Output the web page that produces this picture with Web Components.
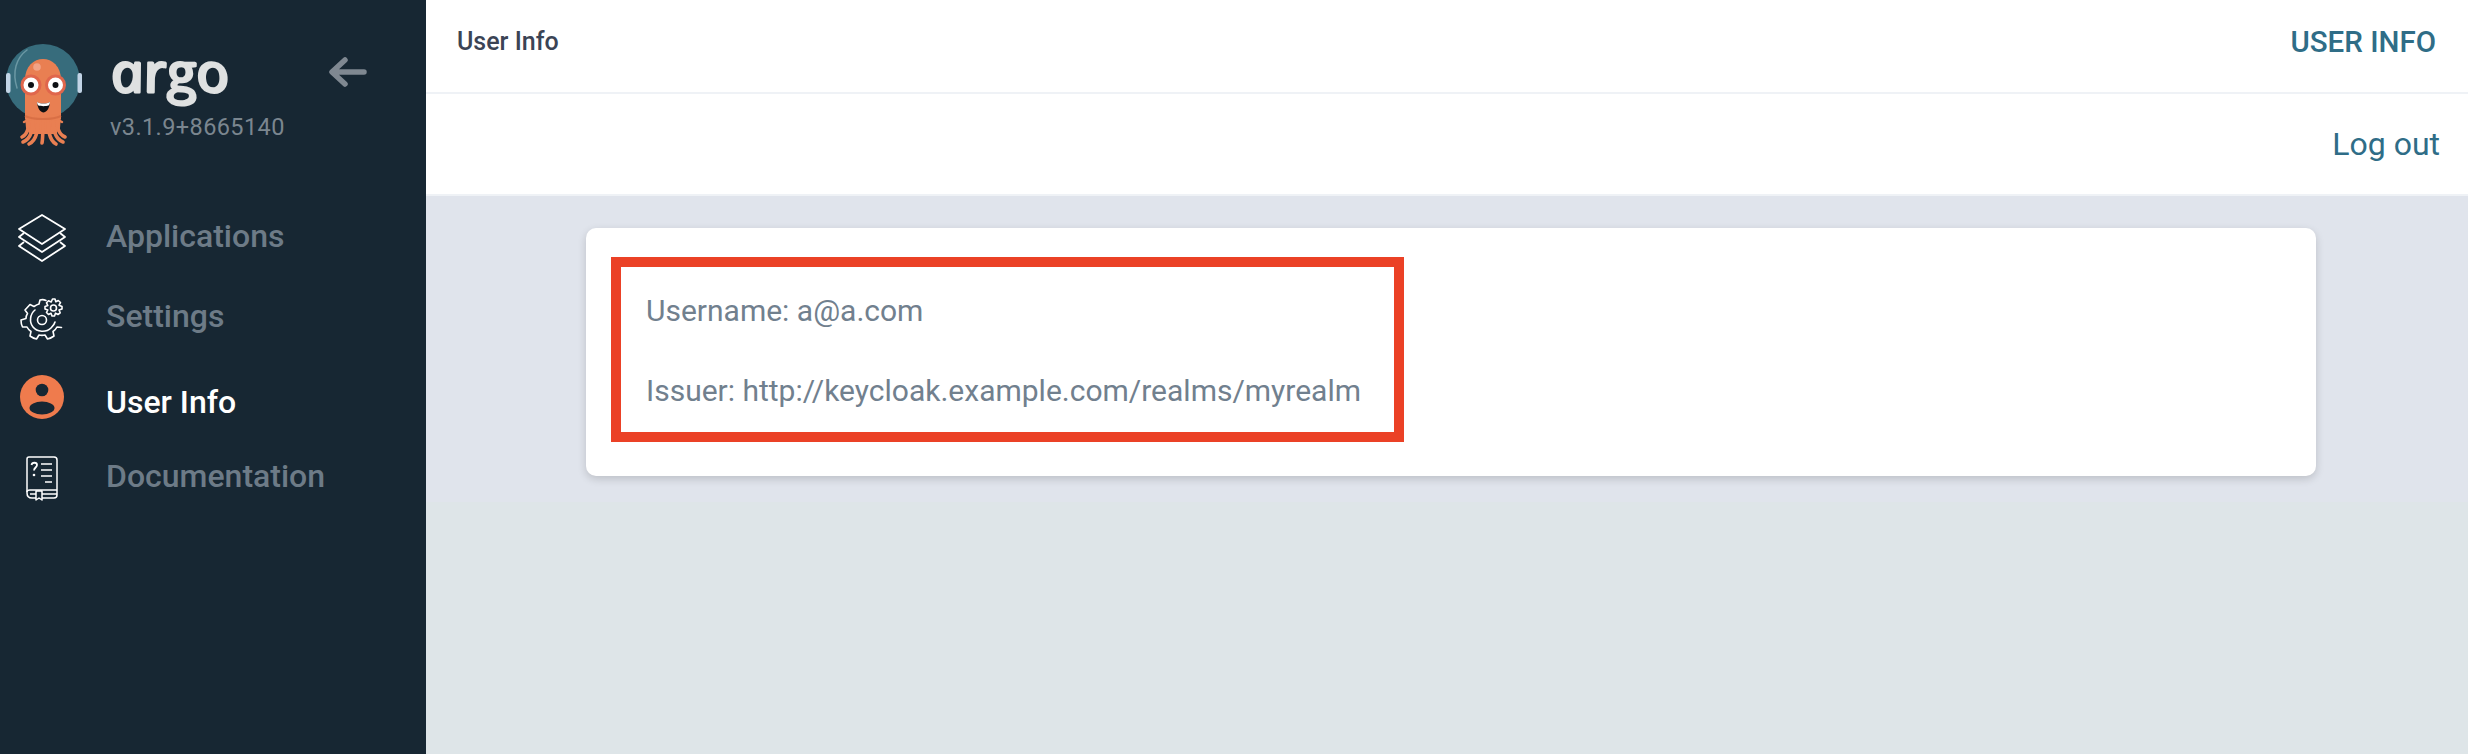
<!DOCTYPE html>
<html>
<head>
<meta charset="utf-8">
<title>User Info</title>
<style>
  html, body { margin: 0; height: 100%; }
  body { font-family: Roboto, "Liberation Sans", sans-serif; background: #dee5e8; overflow: hidden; }
</style>
</head>
<body>
<argo-app>
  <argo-sidebar slot="side"></argo-sidebar>
  <argo-topbar slot="top" title="User Info" tab="USER INFO"></argo-topbar>
  <argo-toolbar slot="top"><a>Log out</a></argo-toolbar>
  <user-card username="a@a.com" issuer="http://keycloak.example.com/realms/myrealm"></user-card>
</argo-app>

<script>
// page shell: dark sidebar on the left, bars and content on the right
class ArgoApp extends HTMLElement {
    constructor() {
        super();
        this.shadow = this.attachShadow({ mode: "open" });
    }
    connectedCallback() {
        this.shadow.innerHTML = /*html*/`
        <style>
            :host { display: flex; width: 100%; height: 754px; }
            .side { flex: 0 0 426px; }
            .main { flex: 1; min-width: 0; display: flex; flex-direction: column; }
            .content { height: 306px; background: #e0e4ec; }
        </style>
        <div class="side"><slot name="side"></slot></div>
        <div class="main">
            <slot name="top"></slot>
            <div class="content"><slot></slot></div>
        </div>`;
    }
}

class ArgoSidebar extends HTMLElement {
    constructor() {
        super();
        this.shadow = this.attachShadow({ mode: "open" });
    }
    connectedCallback() {
        this.shadow.innerHTML = /*html*/`
        <style>
            :host { display: block; height: 754px; background: #172733; color: #fff; }
            .logo-row { display: flex; height: 198px; position: relative; }
            .octo { width: 88px; height: 110px; margin-top: 40px; flex: none; }
            .brand { margin-left: 22px; }
            .word { display: block; width: 140px; height: 60px; margin-top: 46px; overflow: visible; }
            .word text { font-family: "Open Sans", sans-serif; font-style: italic; font-size: 54px; font-weight: 500; fill: #dfe1e1; stroke: #dfe1e1; stroke-width: 3; stroke-linejoin: round; }
            .ver { font-size: 23.5px; color: #7b868f; line-height: 28px; letter-spacing: .4px; margin-top: 7px; }
            .back { position: absolute; left: 328px; top: 57px; width: 40px; height: 34px; }
        </style>
        <div class="logo-row">
            <svg class="octo" viewBox="0 40 88 110">
                <circle cx="43" cy="81" r="37" fill="#376c7c"/>
                <path d="M17 88C12 72 16 58 27 50" fill="none" stroke="#6b98a4" stroke-width="1.5" stroke-linecap="round"/>
                <rect x="6" y="73" width="4.500" height="20" rx="2" fill="#c2d4e6"/>
                <rect x="77.500" y="73" width="4.500" height="20" rx="2" fill="#c2d4e6"/>
                <path d="M25 119V80C25 52 61 52 61 80V119Z" fill="#e97f52"/>
                <circle cx="37" cy="67" r="3.800" fill="#f2a386"/>
                <path d="M25 116H61L60 128L56 134H30L26 128Z" fill="#e97f52"/>
                <g fill="none" stroke="#e97f52" stroke-width="3.600" stroke-linecap="round">
                    <path d="M29 116C29 127 28 134 22 137"/>
                    <path d="M33 116C33 130 31 139 23 142"/>
                    <path d="M38 116C38 130 37 140 29 144"/>
                    <path d="M43 116C43 130 43 138 42 143"/>
                    <path d="M48 116C48 130 49 140 56 144"/>
                    <path d="M53 116C53 130 55 139 63 142"/>
                    <path d="M57 116C57 127 58 134 65 137"/>
                    <path d="M24 122L30 119M62 122L56 119" stroke-width="2.500"/>
                </g>
                <path d="M25 116C33 120 53 120 61 116" fill="none" stroke="#d96f45" stroke-width="2"/>
                <circle cx="31" cy="85" r="9" fill="#fff" stroke="#e0664c" stroke-width="3"/>
                <circle cx="55.500" cy="85" r="9" fill="#fff" stroke="#e0664c" stroke-width="3"/>
                <circle cx="31" cy="85" r="3" fill="#0d1014"/>
                <circle cx="55.500" cy="85" r="3" fill="#0d1014"/>
                <path d="M37 102C41 104 46 104 50 102C49.500 109 46 112.500 43.500 112.500C41 112.500 37.500 109 37 102Z" fill="#0d1014"/>
                <path d="M37 102C41 104 46 104 50 102C49.800 104 49.300 105 48.500 105.600C46 106.400 41 106.400 38.500 105.600C37.700 105 37.200 104 37 102Z" fill="#fff"/>
            </svg>
            <div class="brand">
                <svg class="word" viewBox="0 0 140 60"><text transform="translate(0 46) skewX(12)" x="4" y="0" textLength="118" lengthAdjust="spacingAndGlyphs">argo</text></svg>
                <div class="ver">v3.1.9+8665140</div>
            </div>
            <svg class="back" viewBox="0 0 40 34" fill="none" stroke="#7f8891" stroke-width="5.500" stroke-linecap="round" stroke-linejoin="round">
                <path d="M36 15H6M17 3L4 15L17 27"/>
            </svg>
        </div>
        <nav-item label="Applications">
            <svg viewBox="0 0 48 48" fill="none" stroke="#fff" stroke-width="1.800" stroke-linejoin="round">
                <path d="M24 1L47 15L24 30L1 15Z"/>
                <path d="M6 19L1 23L24 38L47 23L42 19"/>
                <path d="M6 28L1 32L24 47L47 32L42 28"/>
            </svg>
        </nav-item>
        <nav-item label="Settings">
            <svg viewBox="0 0 48 48" fill="none" stroke="#fff" stroke-width="1.600" stroke-linejoin="round" stroke-linecap="round">
                <path d="M28 6.500C26 5.500 23.500 5.500 22 6L21 10C19 10.500 17.500 11.500 16 12.500L12 10.500L7 16L9.500 19.500C8.500 21 8 23 8 24.500L3 26C3 28.500 3.500 31 4.500 33L9 33C10 35 11.500 36.500 13 37.500L12 42C14 43.500 16 44.500 18.500 45L21 41C23 41.500 25 41.500 27 41L29.500 45C32 44.500 34 43.500 36 42L35 37.500C36.500 36.500 38 35 39 33L43.500 33.500"/>
                <path d="M17 16C12 20 11 28 15 33C19 38 28 39 33 34C35 32 36.500 30.500 37 28"/>
                <circle cx="24" cy="26" r="4.500"/>
                <path d="M36.500 2L39 2L39.800 4.800L42.300 3.500L44.500 5.500L43 8.200L46 9.500V12L43 13L44.200 15.800L42 17.500L39.500 16.200L38.500 19H36L35 16.200L32.500 17.500L30.500 15.500L31.800 13L29 12V9.500L31.800 8.500L30.500 5.800L32.500 3.800L35.200 5Z" transform="translate(-2 3)"/>
                <circle cx="35.500" cy="14" r="3"/>
            </svg>
        </nav-item>
        <nav-item label="User Info" active>
            <svg viewBox="0 0 48 48">
                <circle cx="24" cy="23" r="22" fill="#ef7b4d"/>
                <circle cx="24" cy="16" r="6.300" fill="#172733"/>
                <ellipse cx="24" cy="34" rx="12.500" ry="6.500" fill="#172733"/>
            </svg>
        </nav-item>
        <nav-item label="Documentation">
            <svg viewBox="0 0 48 48" fill="none" stroke="#fff" stroke-width="1.500" stroke-linejoin="round">
                <path d="M11 3H36Q39 3 39 6V41Q39 44 36 44H14Q9 44 9 39V5Q9 3 11 3Z"/>
                <path d="M9 38Q9 36 12 36H39"/>
                <path d="M12 40H39"/>
                <path d="M18 37V46L21 44L24 46V37Z" fill="#172733"/>
                <path d="M23 10H34M23 16H34M23 22H34M27 28H34"/>
                <path d="M13.500 11C14 8 19 8 19 11C19 13.500 16 13.500 16 16.500" stroke-width="1.800"/>
                <circle cx="16" cy="21" r="1.300" fill="#fff" stroke="none"/>
            </svg>
        </nav-item>`;
    }
}

class NavItem extends HTMLElement {
    constructor() {
        super();
        this.shadow = this.attachShadow({ mode: "open" });
    }
    connectedCallback() {
        this.shadow.innerHTML = /*html*/`
        <style>
            :host { display: flex; align-items: center; height: 80px; font-size: 32px; font-weight: 500; color: #6d7b87; }
            :host([active]) { color: #fff; }
            .icon { flex: none; width: 48px; height: 48px; margin: 0 40px 0 18px; }
            ::slotted(svg) { display: block; width: 48px; height: 48px; }
            span { margin-top: -4px; }
            :host([active]) span { margin-top: 8px; }
        </style>
        <div class="icon"><slot></slot></div>
        <span>${this.getAttribute("label")}</span>`;
    }
}

class ArgoTopbar extends HTMLElement {
    constructor() {
        super();
        this.shadow = this.attachShadow({ mode: "open" });
    }
    connectedCallback() {
        this.shadow.innerHTML = /*html*/`
        <style>
            :host { display: flex; justify-content: space-between; align-items: center; box-sizing: content-box; height: 83px; padding: 0 32px 9px 31px; background: #fff; border-bottom: 2px solid #eff2f6; }
            .title { font-size: 25px; font-weight: 500; color: #3b4455; }
            .tab { font-size: 29.5px; font-weight: 500; color: #2f6d87; }
        </style>
        <span class="title">${this.getAttribute("title")}</span>
        <span class="tab">${this.getAttribute("tab")}</span>`;
    }
}

class ArgoToolbar extends HTMLElement {
    constructor() {
        super();
        this.shadow = this.attachShadow({ mode: "open" });
    }
    connectedCallback() {
        this.shadow.innerHTML = /*html*/`
        <style>
            :host { display: flex; justify-content: flex-end; align-items: center; height: 100px; padding-right: 28px; background: #fff; border-bottom: 2px solid #eff2f6; font-size: 32px; color: #2f6d87; }
        </style>
        <slot></slot>`;
    }
}

class UserCard extends HTMLElement {
    constructor() {
        super();
        this.shadow = this.attachShadow({ mode: "open" });
    }
    connectedCallback() {
        this.shadow.innerHTML = /*html*/`
        <style>
            :host { display: block; box-sizing: border-box; width: 1730px; height: 248px; margin: 32px 0 0 160px; padding: 29px 25px; background: #fff; border-radius: 10px; box-shadow: 0 3px 8px rgba(0,0,0,.16); color: #71808e; font-size: 30px; }
            .mark { box-sizing: border-box; width: 793px; height: 185px; border: 10px solid #eb4126; padding: 4px 25px 0; }
            p { margin: 0; height: 80px; line-height: 80px; }
        </style>
        <div class="mark">
            <p>Username: ${this.getAttribute("username")}</p>
            <p>Issuer: ${this.getAttribute("issuer")}</p>
        </div>`;
    }
}

customElements.define("argo-app", ArgoApp);
customElements.define("argo-sidebar", ArgoSidebar);
customElements.define("nav-item", NavItem);
customElements.define("argo-topbar", ArgoTopbar);
customElements.define("argo-toolbar", ArgoToolbar);
customElements.define("user-card", UserCard);
</script>
</body>
</html>
